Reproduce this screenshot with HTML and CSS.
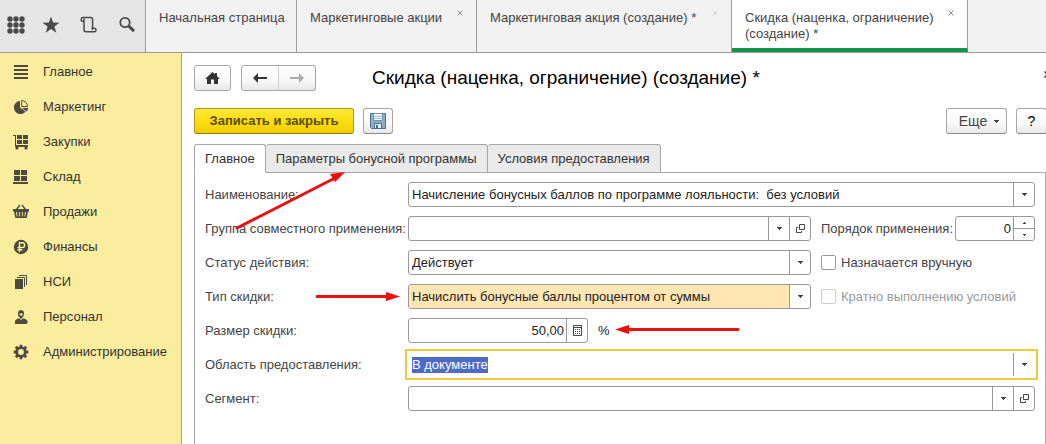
FILE: index.html
```html
<!DOCTYPE html>
<html lang="ru">
<head>
<meta charset="utf-8">
<title>Скидка (наценка, ограничение) (создание) *</title>
<link rel="stylesheet" href="styles.css">
</head>
<body>
<svg class="defs" aria-hidden="true">
  <symbol id="caret" viewBox="0 0 5 3"><path d="M0 0h5v1H4v1H3v1H2V2H1V1H0z"/></symbol>
  <symbol id="open" viewBox="0 0 9 9"><path fill="none" stroke="currentColor" d="M3.5.5h5v5h-5zM2 3.5H.5v5h5V7"/></symbol>
</svg>

<header class="topbar">
  <div class="tools">
    <button class="tool" aria-label="Разделы"><svg width="18" height="18" viewBox="0 0 18 18"><g fill="#4a4a4a"><circle cx="3" cy="3" r="2.7"/><circle cx="9" cy="3" r="2.7"/><circle cx="15" cy="3" r="2.7"/><circle cx="3" cy="9" r="2.7"/><circle cx="9" cy="9" r="2.7"/><circle cx="15" cy="9" r="2.7"/><circle cx="3" cy="15" r="2.7"/><circle cx="9" cy="15" r="2.7"/><circle cx="15" cy="15" r="2.7"/></g></svg></button>
    <button class="tool" aria-label="Избранное"><svg width="18" height="18" viewBox="0 0 18 18"><path fill="#4a4a4a" d="M9 .5l2.1 6.1 6.4.1-5.1 3.9 1.9 6.2L9 13.100l-5.300 3.700 1.900-6.200L.5 6.700l6.400-.1z"/></svg></button>
    <button class="tool" aria-label="История"><svg width="18" height="18" viewBox="0 0 18 18"><path fill="none" stroke="#4a4a4a" stroke-width="1.500" d="M4 5.200H1.800C.9 4.600.9 1.600 2.600 1.600h8c1.400 0 2 .8 2 2v8.600M4 5.200V2.400M4 5v8.300c0 1.800.8 2.500 2 2.500h8.400c2 0 2.200-3.300.4-3.500h-2.500v1.700"/></svg></button>
    <button class="tool" aria-label="Поиск"><svg width="18" height="18" viewBox="0 0 18 18"><circle cx="7" cy="6.500" r="4.700" fill="none" stroke="#4a4a4a" stroke-width="1.800"/><path stroke="#4a4a4a" stroke-width="3" d="M10.800 10.200l5.200 5"/></svg></button>
  </div>
  <nav class="windows">
    <a class="window window-home" href="#">Начальная страница</a>
    <a class="window window-list" href="#">Маркетинговые акции<svg class="close" viewBox="0 0 6 6"><path d="M.5.5l5 5m0-5l-5 5"/></svg></a>
    <a class="window window-action" href="#">Маркетинговая акция (создание) *<svg class="close close-dim" viewBox="0 0 6 6"><path d="M.5.5l5 5m0-5l-5 5"/></svg></a>
    <a class="window window-active" href="#">Скидка (наценка, ограничение) (создание) *<svg class="close" viewBox="0 0 6 6"><path d="M.5.5l5 5m0-5l-5 5"/></svg></a>
  </nav>
</header>

<div class="workspace">
  <nav class="sidebar">
    <a href="#"><svg viewBox="0 0 16 16"><path d="M1 1h14v2H1zM1 5h14v2H1zM1 9h14v2H1zM1 13h14v2H1z"/></svg>Главное</a>
    <a href="#"><svg viewBox="0 0 16 16"><path d="M7 2a6.500 6.500 0 1 0 5.500 10.500L7 8.500z"/><path d="M8.700 1.500v6h5.800a6 6 0 0 0-5.800-6z" fill="none" stroke="currentColor"/><path d="M9 9h6c0 1.300-.5 2.500-1.300 3.500z"/></svg>Маркетинг</a>
    <a href="#"><svg viewBox="0 0 16 16"><path d="M0 1h3v10h12v2H2V2H0zM4 1h5v4H4zM10 1h5v4h-5zM4 6h5v4H4zM10 6h5v4h-5z"/><circle cx="4" cy="14" r="1.600"/><circle cx="13" cy="14" r="1.600"/></svg>Закупки</a>
    <a href="#"><svg viewBox="0 0 16 16"><path d="M1 1h6v5H1zM8 1h6v5H8zM1 7h6v5H1zM8 7h6v5H8zM0 13h15v2H0z"/></svg>Склад</a>
    <a href="#"><svg viewBox="0 0 16 16"><path fill-rule="evenodd" d="M0 5h16v2.500h-1L13.700 14H2.300L1 7.500H0zM3 8l.8 4.500h.8L4 8zm3 0l.3 4.500h.8L7 8zm3 0l-.1 4.500h.8L10 8zm3 0l-.6 4.500h.8L13 8z"/><path fill="none" stroke="currentColor" stroke-width="1.300" d="M3.500 5.500L7 1M12.500 5.500L9 1"/></svg>Продажи</a>
    <a href="#"><svg viewBox="0 0 16 16"><circle cx="8" cy="8" r="7.200"/><path fill="none" stroke="#fbed9e" stroke-width="1.400" d="M6.500 13V3.800h2.800a2.300 2.300 0 0 1 0 4.700H4.500M4.500 10.700h5"/></svg>Финансы</a>
    <a href="#"><svg viewBox="0 0 16 16"><path d="M2 5h8v10H2z"/><path fill="none" stroke="currentColor" d="M4 3.500h7.500V13M6 1.500h7.500V11"/></svg>НСИ</a>
    <a href="#"><svg viewBox="0 0 16 16"><path d="M5 4c0-4 6-4 6 0 0 2.500-.8 4-1.600 4.500L8 10 6.600 8.500C5.800 8 5 6.500 5 4zM2 15v-2.500C2 10.500 4 10 6 9.200l2 1.800 2-1.800c2 .8 4.500 1.300 4.500 3.300V14l-1 1z"/><path fill="#fbed9e" d="M6.300 4.500c1 .2 2.200 0 2.800-.6.300 1 .5 1 .7 1-.2 2-2.800 3-3.500-.4z"/></svg>Персонал</a>
    <a href="#"><svg viewBox="0 0 16 16"><circle cx="8" cy="8" r="4.300" fill="none" stroke="currentColor" stroke-width="2.800"/><g stroke="currentColor" stroke-width="2.800"><path d="M8 .7v3M8 12.300v3M.7 8h3M12.300 8h3M2.800 2.800l2 2M11.200 11.200l2 2M13.200 2.800l-2 2M4.800 11.200l-2 2"/></g></svg>Администрирование</a>
  </nav>

  <main class="content">
    <div class="titlebar">
      <button class="btn btn-home" aria-label="Домой"><svg width="15" height="12" viewBox="0 0 15 12"><path fill="#333" d="M7.500 0L10 2.300V1h2v3.200L15 7h-2v5H9V7.500H6V12H2V7H0z"/></svg></button>
      <div class="history">
        <button class="btn" aria-label="Назад"><svg width="14" height="10" viewBox="0 0 14 10"><path fill="#333" d="M0 5l5-5v4h9v2H5v4z"/></svg></button>
        <button class="btn" aria-label="Вперед" disabled><svg width="14" height="10" viewBox="0 0 14 10"><path fill="#aaa" d="M14 5L9 0v4H0v2h9v4z"/></svg></button>
      </div>
      <h1>Скидка (наценка, ограничение) (создание) *</h1>
      <button class="form-close" aria-label="Закрыть"><svg width="7" height="7" viewBox="0 0 7 7"><path stroke="#333" stroke-width="1.300" d="M.5.5l6 6m0-6l-6 6"/></svg></button>
    </div>

    <div class="commands">
      <button class="btn btn-primary">Записать и закрыть</button>
      <button class="btn btn-save" aria-label="Записать"><svg width="16" height="16" viewBox="0 0 16 16"><path fill="#91aec4" stroke="#49708f" d="M.5.5h15v15h-14l-1-1z"/><path fill="#f4f8fb" stroke="#7394ad" d="M3.500.5h9v7h-9z"/><path stroke="#a9bdcc" d="M4 3.500h8M4 5.500h8"/><path fill="#e4edf4" stroke="#49708f" d="M4.500 10.500h7v5h-7z"/><path fill="#49708f" d="M6 12h2v3H6z"/></svg></button>
      <button class="btn btn-more">Еще<svg class="caret"><use href="#caret"/></svg></button>
      <button class="btn btn-help">?</button>
    </div>

    <div class="tabs" role="tablist">
      <button class="tab tab-active" role="tab" aria-selected="true">Главное</button>
      <button class="tab" role="tab">Параметры бонусной программы</button>
      <button class="tab" role="tab">Условия предоставления</button>
    </div>

    <form class="panel">
      <div class="row">
        <label class="caption" for="name">Наименование:</label>
        <div class="field"><input id="name" type="text" value="Начисление бонусных баллов по программе лояльности:&nbsp; без условий"><button type="button" class="pick" aria-label="Выбрать"><svg class="caret"><use href="#caret"/></svg></button></div>
      </div>
      <div class="row">
        <label class="caption" for="group">Группа совместного применения:</label>
        <div class="field"><input id="group" type="text"><button type="button" class="pick" aria-label="Выбрать"><svg class="caret"><use href="#caret"/></svg></button><button type="button" class="pick" aria-label="Открыть"><svg class="open"><use href="#open"/></svg></button></div>
        <div class="aside">
          <label for="order">Порядок применения:</label>
          <div class="field field-order"><input id="order" class="number" type="text" value="0"><div class="spin"><button type="button" aria-label="Больше"><svg class="step up" viewBox="0 0 3 2"><path d="M0 0h3v1H2v1H1V1H0z"/></svg></button><button type="button" aria-label="Меньше"><svg class="step" viewBox="0 0 3 2"><path d="M0 0h3v1H2v1H1V1H0z"/></svg></button></div></div>
        </div>
      </div>
      <div class="row">
        <label class="caption" for="status">Статус действия:</label>
        <div class="field"><select id="status"><option>Действует</option></select><span class="pick"><svg class="caret"><use href="#caret"/></svg></span></div>
        <div class="aside"><label class="check"><input type="checkbox">Назначается вручную</label></div>
      </div>
      <div class="row">
        <label class="caption" for="kind">Тип скидки:</label>
        <div class="field"><select id="kind" class="marked"><option>Начислить бонусные баллы процентом от суммы</option></select><span class="pick"><svg class="caret"><use href="#caret"/></svg></span></div>
        <div class="aside"><label class="check check-off"><input type="checkbox" disabled>Кратно выполнению условий</label></div>
      </div>
      <div class="row">
        <label class="caption" for="size">Размер скидки:</label>
        <div class="field field-size"><input id="size" class="number" type="text" value="50,00"><button type="button" class="pick" aria-label="Калькулятор"><svg width="9" height="11" viewBox="0 0 9 11"><path fill="none" stroke="#444" d="M.5.5h8v10h-8zM1 2.500h7"/><path fill="#444" d="M2 4h1v1H2zM4 4h1v1H4zM6 4h1v1H6zM2 6h1v1H2zM4 6h1v1H4zM6 6h1v1H6zM2 8h1v1H2zM4 8h1v1H4zM6 8h1v1H6z"/></svg></button></div>
        <span class="unit">%</span>
      </div>
      <div class="row">
        <label class="caption" for="area">Область предоставления:</label>
        <div class="field field-focus"><input id="area" type="text" value="В документе"><button type="button" class="pick" aria-label="Выбрать"><svg class="caret"><use href="#caret"/></svg></button></div>
      </div>
      <div class="row">
        <label class="caption" for="segment">Сегмент:</label>
        <div class="field"><input id="segment" type="text"><button type="button" class="pick" aria-label="Выбрать"><svg class="caret"><use href="#caret"/></svg></button><button type="button" class="pick" aria-label="Открыть"><svg class="open"><use href="#open"/></svg></button></div>
      </div>
    </form>
  </main>
</div>

<svg class="arrows" width="760" height="350" viewBox="0 0 760 350" aria-hidden="true">
  <g stroke="#e81212" stroke-width="3" stroke-linecap="round"><path d="M237 228l96-49M317 296.500h71M738 329.500H626"/></g>
  <g fill="#f50a0a"><path d="M345 172l-10 10-5-8zM400 296.500l-14 4.500v-9zM615 329.500l14-4.500v9z"/></g>
</svg>
<script src="script.js"></script>
</body>
</html>
```
FILE: styles.css
```css
* { box-sizing: border-box; }
body {
  margin: 0;
  height: 100vh;
  display: flex;
  flex-direction: column;
  overflow: hidden;
  background: #fff;
  color: #444;
  font: 13px/16px "Liberation Sans", Arial, sans-serif;
}
button, input, select { font: inherit; color: inherit; margin: 0; padding: 0; border: 0; background: none; outline: 0; }
a { color: inherit; text-decoration: none; }
svg { flex: none; }
.defs { position: absolute; width: 0; height: 0; }

.topbar { display: flex; height: 53px; flex: none; background: #f1f1f1; border-bottom: 1px solid #9c9c9c; }
.tools { display: flex; align-items: center; width: 146px; flex: none; padding: 0 0 3px; background: #e5e5e5; border-right: 1px solid #9c9c9c; }
.tool { display: flex; justify-content: center; width: 38px; flex: none; }
.tool:first-child { width: 32px; }
.windows { display: flex; flex: 1; }
.window { display: flex; justify-content: space-between; padding: 10px 13px 0; border-right: 1px solid #9c9c9c; }
.window-home { width: 151px; white-space: nowrap; }
.window-list { width: 180px; }
.window-action { width: 255px; }
.window-active { width: 236px; background: #fff; border-bottom: 4px solid #14934a; }
.close { width: 6px; height: 6px; fill: none; stroke: #8a8a8a; }
.close-dim { stroke: #ccc; }

.workspace { display: flex; flex: 1; min-height: 0; }
.sidebar { width: 182px; flex: none; padding: 1px 0; background: #fbed9e; border-right: 1px solid #b5a642; }
.sidebar a { display: flex; align-items: center; gap: 14px; height: 35px; padding-left: 13px; color: #333; }
.sidebar svg { width: 16px; height: 16px; fill: #4d4a3f; color: #4d4a3f; }

.content { flex: 1; min-width: 0; display: flex; flex-direction: column; padding: 12px 0 0 12px; }
.titlebar { display: flex; align-items: center; height: 26px; }
.btn { display: flex; align-items: center; justify-content: center; height: 26px; flex: none; border: 1px solid #a6a6a6; border-radius: 3px; background: linear-gradient(#fff, #f8f8f8 60%, #e8e8e8); }
.btn-home { width: 37px; margin-right: 10px; }
.history { display: flex; }
.history .btn { width: 38px; border-radius: 3px 0 0 3px; }
.history .btn + .btn { border-left-color: #ccc; margin-left: -1px; border-radius: 0 3px 3px 0; }
h1 { flex: 1; margin: 0 0 0 56px; font-size: 19px; line-height: 24px; font-weight: normal; color: #000; white-space: nowrap; }
.form-close { display: flex; flex: none; margin: 0 -5px 8px 0; }

.commands { display: flex; margin-top: 17px; }
.commands .btn { border-bottom-color: #888; }
.commands .btn-primary { width: 160px; border-color: #b09a1c; border-bottom-color: #8d7a10; background: linear-gradient(#ffe838, #fbdc0a 60%, #efcb00); font-weight: bold; color: #5c4d0c; }
.btn-save { width: 30px; margin-left: 9px; }
.btn-more { width: 61px; margin-left: auto; gap: 7px; padding-left: 5px; font-size: 14px; }
.btn-help { width: 31px; margin-left: 9px; color: #000; margin-right: -1px; font-size: 14px; }
.caret { width: 5px; height: 3px; fill: #444; }
.open { width: 9px; height: 9px; color: #444; }

.tabs { position: relative; z-index: 1; display: flex; margin-top: 10px; }
.tab { height: 29px; padding: 0 10px; border: 1px solid #a6a6a6; border-left-width: 0; border-radius: 3px 3px 0 0; background: #eaeaea; color: #333; white-space: nowrap; }
.tab-active { border-left-width: 1px; border-bottom-color: #fff; background: #fff; }
.panel { flex: 1; display: flex; flex-direction: column; gap: 9px; margin-top: -1px; padding: 9px 10px 0; border: 1px solid #a6a6a6; border-bottom: 0; }
.row { display: flex; align-items: center; height: 25px; }
.caption { width: 203px; flex: none; white-space: nowrap; }
.field { display: flex; flex: 1; min-width: 0; height: 25px; border: 1px solid #999; border-radius: 3px; background: #fff; color: #222; overflow: hidden; }
.field input, .field select { flex: 1; min-width: 0; width: 0; padding: 0 3px; appearance: none; }
.field .marked { background: #ffe6b3; }
.field .number { text-align: right; padding-right: 2px; }
.pick { display: flex; align-items: center; justify-content: center; width: 21px; flex: none; border-left: 1px solid #999; }
.aside { display: flex; align-items: center; justify-content: space-between; width: 214px; margin-left: 10px; flex: none; white-space: nowrap; }
.aside .field-order { flex: none; width: 80px; }
.spin { display: flex; flex-direction: column; width: 21px; border-left: 1px solid #999; }
.spin button { display: flex; flex: 1; align-items: center; justify-content: center; }
.spin button + button { border-top: 1px solid #999; }
.step { width: 3px; height: 2px; fill: #444; }
.up { transform: rotate(180deg); }
.check { display: flex; align-items: center; gap: 5px; }
.check input { appearance: none; width: 15px; height: 15px; border: 1px solid #999; border-radius: 2px; background: #fff; }
.check-off { color: #999; }
.check-off input { border-color: #ccc; }
.field-size { flex: none; width: 180px; }
.unit { margin-left: 10px; color: #222; }
.field-focus { height: 31px; margin: 0 -3px; padding: 2px; border: 2px solid #efcb3c; border-radius: 0; }
#area::selection { background: #4e6ac5; color: #fff; }

.arrows { position: absolute; left: 0; top: 0; z-index: 2; pointer-events: none; }
```
FILE: script.js
```js
const area = document.getElementById("area");
area.focus();
area.select();
```
